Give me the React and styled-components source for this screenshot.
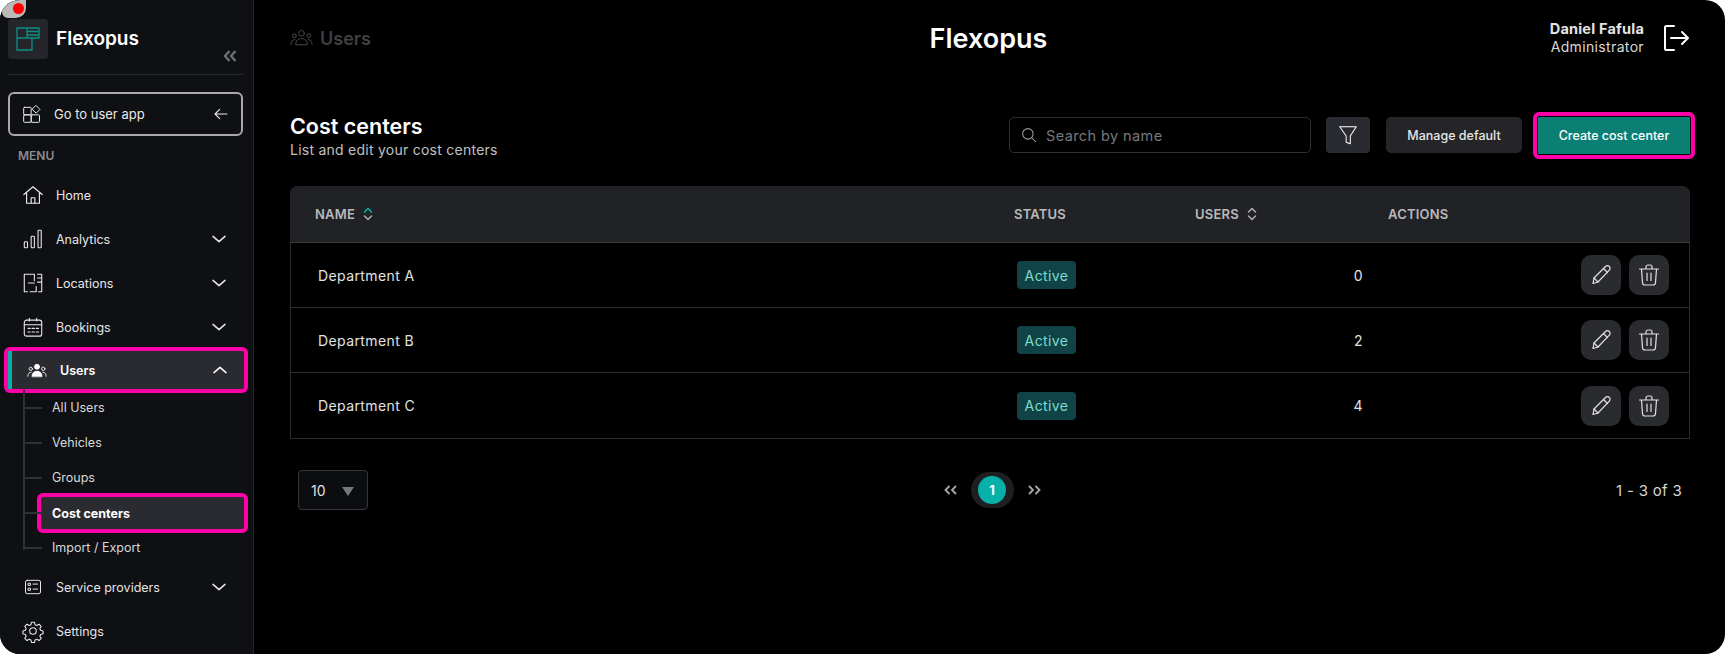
import React from 'react'
import styled, { createGlobalStyle } from 'styled-components'

const GlobalStyle = createGlobalStyle`
  html, body { margin: 0; padding: 0; background: #fff; }
  body { font-family: Inter, "Noto Sans", sans-serif; color: #fff; }
  * { box-sizing: border-box; }
`

const Frame = styled.div`
  position: relative;
  display: flex;
  width: 1725px;
  height: 654px;
  overflow: hidden;
  border-radius: 20px;
  background: #000;
`

const RecordDot = styled.div`
  position: absolute;
  top: 0;
  left: 2px;
  width: 24px;
  height: 18px;
  border-radius: 0 0 10px 6px;
  background: #b9b9b9;

  &::after {
    content: '';
    position: absolute;
    top: 3px;
    left: 11px;
    width: 11px;
    height: 11px;
    border-radius: 50%;
    background: #ff0000;
  }
`

const Sidebar = styled.aside`
  flex: 0 0 254px;
  min-width: 0;
  height: 654px;
  padding: 19px 10px 0 8px;
  background: #0f1014;
  border-right: 1px solid #26272b;
`

const Brand = styled.div`
  display: flex;
  align-items: flex-start;
  gap: 8px;
  height: 56px;
  border-bottom: 1px solid #26272b;
  position: relative;
`

const LogoBox = styled.div`
  display: flex;
  align-items: center;
  justify-content: center;
  width: 40px;
  height: 40px;
  border-radius: 3px;
  background: #24262b;
`

const BrandName = styled.div`
  margin-top: 7px;
  font-size: 19px;
  font-weight: 600;
  line-height: 25px;
`

const Collapse = styled.div`
  position: absolute;
  left: 215px;
  top: 31px;
  display: flex;
  color: #6d6e72;
`

const GoButton = styled.div`
  display: flex;
  align-items: center;
  width: 235px;
  height: 44px;
  margin-top: 17px;
  padding: 0 12px;
  border: 2px solid #a9a9a9;
  border-radius: 6px;
  font-size: 13px;
  color: #e8e8e8;

  span { margin-left: 12px; flex: 1; }
`

const MenuLabel = styled.div`
  height: 37px;
  padding: 12px 0 0 10px;
  font-size: 12px;
  line-height: 15px;
  font-weight: 600;
  color: #8b8c90;
`

const NavRow = styled.div`
  display: flex;
  align-items: center;
  height: 44px;
  padding: 0 15px 0 14px;
  font-size: 12.5px;
  color: #e6e6e6;

  ${p => p.$active && `
    width: 244px;
    height: 46px;
    margin: -2px 0 0 -4px;
    padding-left: 18px;
    border: 4px solid #ff00a8;
    border-radius: 6px;
    background: #2a2b30;
    font-weight: 600;
    color: #fff;
    position: relative;
    &::before {
      content: '';
      position: absolute;
      left: 0;
      top: 0;
      bottom: 0;
      width: 4px;
      background: #07b0a4;
    }
  `}
`

const NavIcon = styled.div`
  display: flex;
  justify-content: center;
  width: 22px;
  margin-right: 12px;
`

const NavText = styled.div`
  flex: 1;
`

const SubList = styled.div`
  position: relative;
  margin-top: -3px;
  padding-left: 29px;

  &::before {
    content: '';
    position: absolute;
    left: 15px;
    top: 0;
    height: 160px;
    width: 2px;
    background: #303136;
  }
`

const SubRow = styled.div`
  position: relative;
  display: flex;
  align-items: center;
  height: 35px;
  padding-left: 15px;
  font-size: 12.5px;
  color: #d8d8d8;

  &::before {
    content: '';
    position: absolute;
    left: -13px;
    top: 17px;
    width: 18px;
    height: 2px;
    background: #303136;
  }

  ${p => p.$active && `
    width: 211px;
    height: 40px;
    margin: -2px 0 -3px 0;
    border: 4px solid #ff00a8;
    border-radius: 6px;
    background: #2a2b30;
    padding-left: 11px;
    font-weight: 700;
    color: #fff;
    &::before { left: -17px; top: 15px; }
  `}
`

const Main = styled.main`
  flex: 1;
  min-width: 0;
  display: flex;
  flex-direction: column;
  padding: 0 35px 0 36px;
`

const Header = styled.header`
  display: grid;
  grid-template-columns: 1fr auto 1fr;
  align-items: center;
  height: 76px;
`

const Crumb = styled.div`
  display: flex;
  align-items: center;
  gap: 7px;
  font-size: 18px;
  font-weight: 600;
  color: #3f4043;
`

const AppTitle = styled.div`
  font-size: 27px;
  font-weight: 600;
  margin-left: -3px;
`

const UserBox = styled.div`
  display: flex;
  justify-content: flex-end;
  align-items: center;
  gap: 18px;
`

const UserText = styled.div`
  text-align: right;
  font-size: 14px;
  line-height: 18px;
  letter-spacing: 0.35px;
  color: #d9d9d9;

  b { display: block; font-weight: 700; color: #e4e4e4; font-size: 14.5px; letter-spacing: 0.2px; }
`

const PageHead = styled.div`
  display: flex;
  align-items: center;
  height: 64px;
  margin: 27px -5px 0 0;
`

const Heading = styled.div`
  flex: 1;
  margin-top: 3px;

  h2 { margin: 0; font-size: 21.5px; line-height: 26px; font-weight: 600; }
  p { margin: 0; font-size: 14px; line-height: 22px; letter-spacing: 0.25px; color: #c0c0c0; }
`

const Search = styled.div`
  display: flex;
  align-items: center;
  gap: 8px;
  width: 302px;
  height: 36px;
  padding: 0 10px;
  border: 1px solid #2e2f33;
  border-radius: 5px;
  font-size: 14.5px;
  letter-spacing: 0.4px;
  color: #77787c;
`

const FilterButton = styled.div`
  display: flex;
  align-items: center;
  justify-content: center;
  width: 44px;
  height: 36px;
  margin-left: 15px;
  border-radius: 4px;
  background: #2a2b30;
`

const PlainButton = styled.div`
  display: flex;
  align-items: center;
  justify-content: center;
  width: 136px;
  height: 36px;
  margin-left: 16px;
  border-radius: 5px;
  background: #252528;
  font-size: 12.5px;
  font-weight: 500;
  color: #e6e6e6;
`

const CreateButton = styled.div`
  display: flex;
  align-items: center;
  justify-content: center;
  width: 162px;
  height: 47px;
  margin-left: 11px;
  border: 4px solid #ff00a8;
  border-radius: 6px;
  background: #0a7f74;
  box-shadow: inset 0 0 0 1px #000;
  font-size: 12.5px;
  font-weight: 500;
  color: #fff;
`

const Table = styled.div`
  width: 1400px;
  margin-top: 19px;
  border: 1px solid #2a2b2f;
  border-top: 0;
  border-radius: 8px 8px 0 0;
`

const Cols = styled.div`
  display: grid;
  grid-template-columns: 699px 181px 193px 1fr;
  align-items: center;
`

const HeadRow = styled(Cols)`
  height: 57px;
  margin: 0 -1px;
  padding-left: 25px;
  border-radius: 8px 8px 0 0;
  border-bottom: 1px solid #3a3b3f;
  background: #212226;
  font-size: 13px;
  font-weight: 600;
  letter-spacing: 0.2px;
  color: #b9b9bc;
`

const HeadCell = styled.div`
  display: flex;
  align-items: center;
  gap: 8px;
`

const Row = styled(Cols)`
  height: 65px;
  padding-left: 27px;
  font-size: 14px;
  letter-spacing: 0.4px;
  color: #e2e2e2;
  border-bottom: 1px solid #2a2b2f;

  &:last-child { border-bottom: 0; }
`

const Badge = styled.div`
  display: inline-flex;
  align-items: center;
  justify-content: center;
  width: 59px;
  height: 28px;
  border-radius: 4px;
  background: #0f4347;
  color: #7fdccb;
`

const Count = styled.div`
  width: 165px;
  text-align: right;
`

const Actions = styled.div`
  display: flex;
  justify-content: flex-end;
  gap: 8px;
  padding-right: 20px;
`

const ActionButton = styled.div`
  display: flex;
  align-items: center;
  justify-content: center;
  width: 40px;
  height: 40px;
  border-radius: 10px;
  background: #2a2b2f;
`

const Footer = styled.div`
  display: grid;
  grid-template-columns: 1fr auto 1fr;
  align-items: center;
  margin-top: 31px;
  padding: 0 8px;
`

const PageSize = styled.div`
  display: flex;
  align-items: center;
  justify-content: space-between;
  width: 70px;
  height: 40px;
  padding: 0 13px 0 12px;
  border: 1px solid #35363a;
  border-radius: 4px;
  background: #0c0d11;
  font-size: 14px;
  color: #e0e0e0;
`

const Caret = styled.div`
  width: 0;
  height: 0;
  margin-top: 2px;
  border-left: 6px solid transparent;
  border-right: 6px solid transparent;
  border-top: 9px solid #77787c;
`

const Pager = styled.div`
  display: flex;
  align-items: center;
  gap: 13px;
  margin-left: 4px;
  color: #a9a9a9;
`

const PageRing = styled.div`
  display: flex;
  align-items: center;
  justify-content: center;
  width: 43px;
  height: 36px;
  border-radius: 18px;
  background: #1e1f22;
`

const PageDot = styled.div`
  display: flex;
  align-items: center;
  justify-content: center;
  width: 28px;
  height: 28px;
  border-radius: 50%;
  background: #07b0a8;
  font-size: 13px;
  font-weight: 700;
  color: #fff;
`

const Range = styled.div`
  text-align: right;
  font-size: 15px;
  letter-spacing: 0.3px;
  color: #d5d5d5;
`

const Ico = ({ size = 24, sw = 1.5, children, color = 'currentColor' }) => (
  <svg width={size} height={size} viewBox="0 0 24 24" fill="none" stroke={color} strokeWidth={sw} strokeLinecap="round" strokeLinejoin="round">
    {children}
  </svg>
)

const Chevron = ({ up }) => (
  <Ico size={18} sw={2}>
    <path d={up ? 'M4 15.5l8-7 8 7' : 'M4 8.5l8 7 8-7'} />
  </Ico>
)

const Sort = ({ top = '#a9a9ac' }) => (
  <svg width="10" height="14" viewBox="0 0 10 14" fill="none" strokeWidth="1.6" strokeLinecap="round" strokeLinejoin="round">
    <path d="M1.5 5L5 1.5 8.5 5" stroke={top} />
    <path d="M1.5 9L5 12.5 8.5 9" stroke="#a9a9ac" />
  </svg>
)

const PeopleIcon = ({ size = 24, solid, color = '#fff' }) => (
  <svg width={size} height={size * 0.75} viewBox="0 0 24 18" fill={solid ? color : 'none'} stroke={color} strokeWidth="1" strokeLinecap="round">
    <circle cx="12" cy="4.5" r="3" />
    <circle cx="4.5" cy="7" r="2" fill="none" />
    <circle cx="19.5" cy="7" r="2" fill="none" />
    <path d="M6 16c0-4 2.5-6 6-6s6 2 6 6z" fill={solid ? color : 'none'} />
    <path d="M1 16c0-3 1.5-5 4-5M23 16c0-3-1.5-5-4-5" fill="none" />
  </svg>
)

const icons = {
  home: (
    <Ico size={24} sw={1.3}>
      <path d="M2 11.5L12 3l10 8.500M5 9.500V21h14V9.500" />
      <path d="M10 21v-6h4v6" />
    </Ico>
  ),
  analytics: (
    <Ico size={24} sw={1.2}>
      <rect x="2.500" y="15" width="3.500" height="6.500" rx="0.8" />
      <rect x="10" y="9" width="3.500" height="12.500" rx="0.8" />
      <rect x="17.500" y="2.500" width="3.500" height="19" rx="0.8" />
    </Ico>
  ),
  locations: (
    <Ico size={24} sw={1.2}>
      <path d="M6 21.500H2.500v-19h11v7M7 12h6.500" />
      <path d="M9 21.500h6.500V16M17 2.500h4.500v19H18M17 6.500h4.500M17 11h4.500" />
    </Ico>
  ),
  bookings: (
    <Ico size={24} sw={1.2}>
      <rect x="2.500" y="4.500" width="19" height="17.500" rx="2.500" />
      <path d="M2.500 9.500h19M8 2.500v3M16 2.500v3M6.500 13.500h2.500M11 13.500h2.500M15.500 13.500h2.500M6.500 17.500h2.500M11 17.500h2.500M15.500 17.500h2.500" />
    </Ico>
  ),
  providers: (
    <Ico size={20} sw={1.2}>
      <rect x="3" y="4" width="18" height="16" rx="2" />
      <rect x="6.500" y="7.500" width="2.500" height="2.500" />
      <rect x="6.500" y="13.500" width="2.500" height="2.500" />
      <path d="M12 8.500h5.500M12 14.500h5.500" />
    </Ico>
  ),
  settings: (
    <Ico size={24} sw={1.2}>
      <circle cx="12" cy="12" r="3.600" />
      <path d="M10.300 2.500h3.400l.6 2.700 1.900.8 2.400-1.400 2.300 2.400-1.400 2.300.8 1.900 2.700.7v3.200l-2.700.7-.8 1.900 1.400 2.300-2.300 2.400-2.400-1.400-1.900.8-.6 2.700h-3.400l-.6-2.700-1.900-.8-2.400 1.400-2.300-2.400 1.400-2.300-.8-1.900-2.700-.7v-3.200l2.700-.7.8-1.900-1.400-2.300 2.300-2.400 2.400 1.400 1.900-.8z" />
    </Ico>
  ),
}

const groups = [
  { icon: icons.home, label: 'Home' },
  { icon: icons.analytics, label: 'Analytics', chevron: true },
  { icon: icons.locations, label: 'Locations', chevron: true },
  { icon: icons.bookings, label: 'Bookings', chevron: true },
]

const subItems = ['All Users', 'Vehicles', 'Groups', 'Cost centers', 'Import / Export']
const rows = [
  { name: 'Department A', users: 0 },
  { name: 'Department B', users: 2 },
  { name: 'Department C', users: 4 },
]

export default function App() {
  return (
    <Frame>
      <GlobalStyle />
      <RecordDot />
      <Sidebar>
        <Brand>
          <LogoBox>
            <svg width="24" height="24" viewBox="0 0 24 24" fill="none" stroke="#0f8f85" strokeWidth="1.3">
              <path d="M1 1h22v10H16v12H1zM1 11h15M11 1v10M11 4.500h12M11 8h12" />
            </svg>
          </LogoBox>
          <BrandName>Flexopus</BrandName>
          <Collapse>
            <svg width="14" height="12" viewBox="0 0 14 12" fill="none" stroke="currentColor" strokeWidth="2.400">
              <path d="M6.500 1L2 6l4.500 5M12.500 1L8 6l4.500 5" />
            </svg>
          </Collapse>
        </Brand>
        <GoButton>
          <Ico size={20} sw={1.2}>
            <rect x="2" y="4" width="9" height="9" rx="1" />
            <rect x="2" y="13" width="9" height="9" rx="1" />
            <rect x="11" y="13" width="10" height="9" rx="1" />
            <path d="M17 2l4.500 4.500L17 11l-4.500-4.500z" />
          </Ico>
          <span>Go to user app</span>
          <Ico size={16} sw={1.600}>
            <path d="M21 12H3M10 5l-7 7 7 7" />
          </Ico>
        </GoButton>
        <MenuLabel>MENU</MenuLabel>
        {groups.map(g => (
          <NavRow key={g.label}>
            <NavIcon>{g.icon}</NavIcon>
            <NavText>{g.label}</NavText>
            {g.chevron && <Chevron />}
          </NavRow>
        ))}
        <NavRow $active>
          <NavIcon><PeopleIcon size={20} solid /></NavIcon>
          <NavText>Users</NavText>
          <Chevron up />
        </NavRow>
        <SubList>
          {subItems.map(s => (
            <SubRow key={s} $active={s === 'Cost centers'}>{s}</SubRow>
          ))}
        </SubList>
        <NavRow>
          <NavIcon>{icons.providers}</NavIcon>
          <NavText>Service providers</NavText>
          <Chevron />
        </NavRow>
        <NavRow>
          <NavIcon>{icons.settings}</NavIcon>
          <NavText>Settings</NavText>
        </NavRow>
      </Sidebar>
      <Main>
        <Header>
          <Crumb>
            <PeopleIcon size={23} color="#4a4b4e" />
            Users
          </Crumb>
          <AppTitle>Flexopus</AppTitle>
          <UserBox>
            <UserText>
              <b>Daniel Fafula</b>
              Administrator
            </UserText>
            <svg width="28" height="28" viewBox="0 0 28 28" fill="none" stroke="#fff" strokeWidth="2" strokeLinecap="round" strokeLinejoin="round">
              <path d="M12 2H4.500A1.500 1.500 0 003 3.500v21A1.500 1.500 0 004.500 26H12M9 14h17M20 8l6 6-6 6" />
            </svg>
          </UserBox>
        </Header>
        <PageHead>
          <Heading>
            <h2>Cost centers</h2>
            <p>List and edit your cost centers</p>
          </Heading>
          <Search>
            <Ico size={18} sw={1.4} color="#a0a0a0">
              <circle cx="10.500" cy="10.500" r="7" />
              <path d="M16 16l5 5" />
            </Ico>
            Search by name
          </Search>
          <FilterButton>
            <Ico size={22} sw={1.1}>
              <path d="M3 3h18l-6.500 10v8.500L10 20v-7z" />
            </Ico>
          </FilterButton>
          <PlainButton>Manage default</PlainButton>
          <CreateButton>Create cost center</CreateButton>
        </PageHead>
        <Table>
          <HeadRow>
            <HeadCell>NAME <Sort top="#07b0a4" /></HeadCell>
            <HeadCell>STATUS</HeadCell>
            <HeadCell>USERS <Sort /></HeadCell>
            <HeadCell>ACTIONS</HeadCell>
          </HeadRow>
          {rows.map(r => (
            <Row key={r.name}>
              <div>{r.name}</div>
              <div><Badge>Active</Badge></div>
              <Count>{r.users}</Count>
              <Actions>
                <ActionButton>
                  <Ico size={24} sw={1.2}>
                    <path d="M4 20.500l1-5.500L16.500 3.500a2.500 2.500 0 013.800 0 2.600 2.600 0 010 3.700L9 19z" />
                    <path d="M5 15l4 4M14.500 5.500l4 4" />
                  </Ico>
                </ActionButton>
                <ActionButton>
                  <Ico size={24} sw={1.2}>
                    <path d="M2.500 6h19M9 6V4a2 2 0 012-2h2a2 2 0 012 2v2M4.500 6l1 13.500A2.500 2.500 0 008 22h8a2.500 2.500 0 002.500-2.500l1-13.500M10 10v7.500M14 10v7.500" />
                  </Ico>
                </ActionButton>
              </Actions>
            </Row>
          ))}
        </Table>
        <Footer>
          <PageSize>10 <Caret /></PageSize>
          <Pager>
            <svg width="14" height="10" viewBox="0 0 14 10" fill="none" stroke="currentColor" strokeWidth="1.800">
              <path d="M5.500 1L1.500 5l4 4M12 1L8 5l4 4" />
            </svg>
            <PageRing><PageDot>1</PageDot></PageRing>
            <svg width="14" height="10" viewBox="0 0 14 10" fill="none" stroke="currentColor" strokeWidth="1.800">
              <path d="M2 1l4 4-4 4M8.500 1l4 4-4 4" />
            </svg>
          </Pager>
          <Range>1 - 3 of 3</Range>
        </Footer>
      </Main>
    </Frame>
  )
}
